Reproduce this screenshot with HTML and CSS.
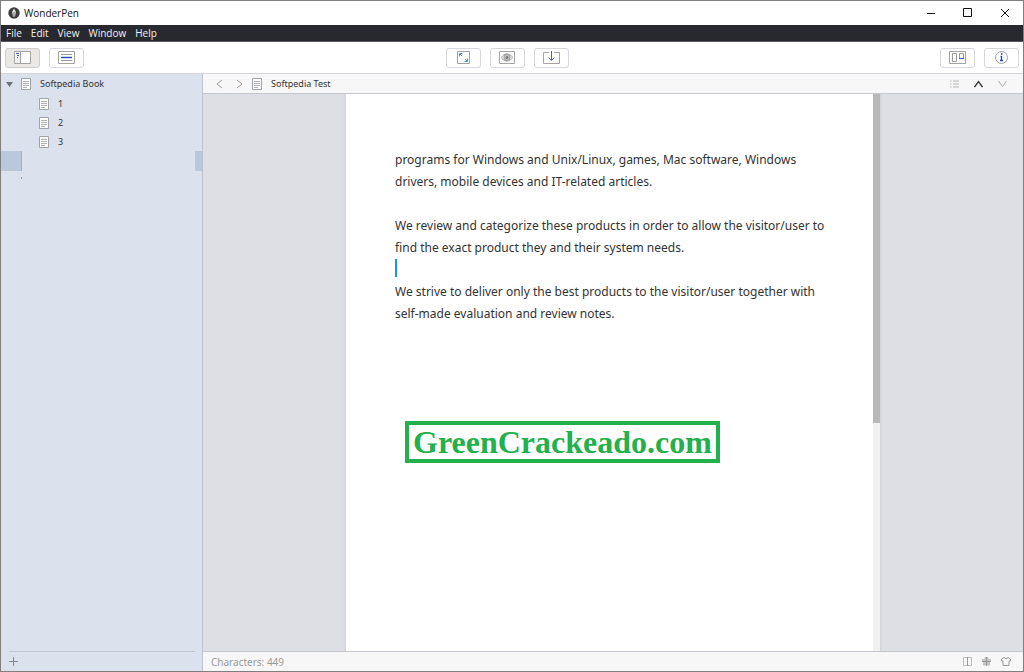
FILE: index.html
```
<!DOCTYPE html>
<html lang="en">
<head>
<meta charset="utf-8">
<title>WonderPen</title>
<link rel="stylesheet" href="styles.css">
</head>
<body>
<svg class="defs" aria-hidden="true">
  <symbol id="doc" viewBox="0 0 11 12"><path d="M.5.5h9v11h-9z" fill="#fcfcfc" stroke="#a0a3a8"/><path d="M2 3.500h6M2 5.500h6M2 7.500h6M2 9.500h4" stroke="#b0b2b6"/></symbol>
</svg>
<div class="window">
  <header class="titlebar">
    <svg class="logo" width="12" height="12" viewBox="0 0 12 12"><circle cx="6" cy="6" r="5.700" fill="#3c3c3c"/><path d="M6 1.500 7.900 5 7 9.500H5L4.100 5z" fill="#e8e8e4"/><path d="M6 5v4" stroke="#666"/></svg>
    <h1 class="title">WonderPen</h1>
    <div class="controls">
      <button class="control" aria-label="Minimize"><svg width="10" height="10"><path d="M1 5.500h8" stroke="#111"/></svg></button>
      <button class="control" aria-label="Maximize"><svg width="10" height="10"><path d="M.5.5h8v8h-8z" fill="none" stroke="#111"/></svg></button>
      <button class="control" aria-label="Close"><svg width="10" height="10"><path d="m1 1 8 8m0-8L1 9" stroke="#111"/></svg></button>
    </div>
  </header>
  <nav class="menubar" aria-label="Main menu">
    <button class="menu">File</button><button class="menu">Edit</button><button class="menu">View</button><button class="menu">Window</button><button class="menu">Help</button>
  </nav>
  <div class="toolbar">
    <div class="tools">
      <button class="tool active" aria-label="Toggle sidebar"><svg width="17" height="13"><path d="M.5.5h16v12H.5z" fill="#fff" stroke="#a3a3a3"/><path d="M1 1h5v11H1z" fill="#f1f1f1"/><path d="M6.500 1v11" stroke="#a3a3a3"/><path d="M2 2.500h3M3 4.500h2M3 6.500h1" stroke="#4763b8"/></svg></button>
      <button class="tool" aria-label="Outline"><svg width="17" height="13"><path d="M.5.5h16v12H.5z" fill="#fff" stroke="#a3a3a3"/><path d="M3 3.500h11M3 9.500h11" stroke="#999"/><path d="M3 6.500h11" stroke="#2348b4" stroke-width="1.400"/></svg></button>
    </div>
    <div class="tools center">
      <button class="tool" aria-label="Full screen"><svg width="13" height="13"><path d="M.5.5h12v12H.5z" fill="#fff" stroke="#a3a3a3"/><path d="M5.500 2.500h-3v3M3 3l2 2M7.500 10.500h3v-3M10 10 8 8" fill="none" stroke="#4a90e2"/></svg></button>
      <button class="tool" aria-label="Focus mode"><svg width="16" height="13"><path d="M.5.5h15v12H.5z" fill="#fff" stroke="#a3a3a3"/><path d="M2 6.500Q8-1 14 6.500 8 14 2 6.500z" fill="#e8e8e8" stroke="#aaa"/><circle cx="8" cy="6.500" r="3" fill="#ccc" stroke="#999"/><circle cx="8" cy="6.500" r="1.500" fill="#777"/></svg></button>
      <button class="tool" aria-label="Export"><svg width="17" height="13"><path d="M6 1.500H.5v11h16v-11H11" fill="none" stroke="#a3a3a3"/><path d="M8.500 0v9M5.500 6.500l3 3 3-3" fill="none" stroke="#4763c8"/></svg></button>
    </div>
    <div class="tools end">
      <button class="tool" aria-label="Cards"><svg width="17" height="13"><path d="M.5.5h16v12H.5z" fill="#fff" stroke="#a3a3a3"/><path d="M3.500 2.500h4v8h-4zM10.500 2.500h4v5h-4z" fill="none" stroke="#999"/><path d="M10 7.500h5" stroke="#3454c4"/></svg></button>
      <button class="tool" aria-label="Information"><svg width="13" height="13"><circle cx="6.500" cy="6.500" r="6" fill="#fff" stroke="#a3a3a3"/><path d="M5.500 5.500h1v4M5 9.500h3M6 3h1.500" fill="none" stroke="#2348b4" stroke-width="1.300"/></svg></button>
    </div>
  </div>
  <div class="main">
    <aside class="sidebar">
      <ul class="tree">
        <li class="row root"><svg width="7" height="5"><path d="M0 0h7L3.500 5z" fill="#707278"/></svg><svg width="11" height="12"><use href="#doc"/></svg>Softpedia Book</li>
        <li class="row child"><svg width="11" height="12"><use href="#doc"/></svg>1</li>
        <li class="row child"><svg width="11" height="12"><use href="#doc"/></svg>2</li>
        <li class="row child"><svg width="11" height="12"><use href="#doc"/></svg>3</li>
        <li class="row selected"><span class="edge start"></span><span class="edge"></span></li>
        <li class="row speck"><span class="dot"></span></li>
      </ul>
      <div class="sidefoot"><button class="plain" aria-label="Add document"><svg width="9" height="9"><path d="M4.500 0v9M0 4.500h9" stroke="#85888e"/></svg></button></div>
    </aside>
    <section class="editor">
      <div class="path">
        <button class="plain" aria-label="Back"><svg width="7" height="10"><path d="M6 1 1 5l5 4" fill="none" stroke="#999"/></svg></button>
        <button class="plain" aria-label="Forward"><svg width="7" height="10"><path d="m1 1 5 4-5 4" fill="none" stroke="#999"/></svg></button>
        <h2 class="docname"><svg width="11" height="12"><use href="#doc"/></svg>Softpedia Test</h2>
        <div class="pathend">
          <button class="plain" aria-label="Contents"><svg width="9" height="8"><path d="M0 1h1.500M3 1h6M0 4h1.500M3 4h6M0 7h1.500M3 7h6" stroke="#b8b8b8"/></svg></button>
          <button class="plain" aria-label="Previous"><svg width="9" height="8"><path d="m.5 7 4-5.500 4 5.500" fill="none" stroke="#333" stroke-width="1.300"/></svg></button>
          <button class="plain" aria-label="Next"><svg width="9" height="8"><path d="m.5 1 4 5.500L8.500 1" fill="none" stroke="#aaa"/></svg></button>
        </div>
      </div>
      <div class="desk">
        <div class="paper">
          <div class="page" role="textbox" aria-multiline="true" aria-label="Document" tabindex="0">
            <p>programs for Windows and Unix/Linux, games, Mac software, Windows drivers, mobile devices and IT-related articles.</p>
            <p class="blank"></p>
            <p>We review and categorize these products in order to allow the visitor/user to find the exact product they and their system needs.</p>
            <p class="blank"><span class="caret"></span></p>
            <p>We strive to deliver only the best products to the visitor/user together with self-made evaluation and review notes.</p>
            <div class="stamp">GreenCrackeado.com</div>
          </div>
          <div class="scroll"><div class="thumb"></div></div>
        </div>
      </div>
      <footer class="status">
        <span>Characters: 449</span>
        <div class="statusend">
          <button class="plain" aria-label="Split view"><svg width="9" height="9"><path d="M4 .5H.5v8H4M5 .5h3.500v8H5" fill="none" stroke="#bbb"/><path d="M4.500 0v9" stroke="#999"/></svg></button>
          <button class="plain" aria-label="Gift"><svg width="9" height="9"><path d="M0 2h9v2.500H0zM1 5h7v3.500H1z" fill="#c4c4c4"/><path d="M4.500 0v9M2.500 1h4M0 4.500h9" stroke="#999"/></svg></button>
          <button class="plain" aria-label="Theme"><svg width="10" height="9"><path d="M3 .5.5 2v2H2v4.500h6V4h1.500V2L7 .5Q5 3 3 .5z" fill="none" stroke="#999"/></svg></button>
        </div>
      </footer>
    </section>
  </div>
</div>
</body>
</html>
```
FILE: styles.css
```
* { box-sizing: border-box; }
body, h1, h2, p, ul { margin: 0; padding: 0; font-size: inherit; font-weight: 400; }
body { font: 10px/14px "Noto Sans", "Open Sans", sans-serif; color: #333; }
button { padding: 0; border: 0; background: none; font: inherit; color: inherit; }
svg { display: block; flex: none; }
.defs { position: absolute; width: 0; height: 0; }
.window { height: 100vh; display: flex; flex-direction: column; border: 1px solid #7f7f7f; background: #fff; }
.titlebar { height: 24px; flex: none; display: flex; align-items: center; padding-left: 7px; gap: 4px; color: #111; }
.title { font-family: "Open Sans", sans-serif; }
.controls { margin-left: auto; display: flex; }
.control { width: 37px; height: 23px; display: grid; place-items: center; }
.menubar { height: 17px; flex: none; display: flex; gap: 9px; padding-left: 5px; align-items: center; background: #28292e; color: #f2f2f2; border-bottom: 1px solid #55565a; font-family: "Open Sans", sans-serif; }
.toolbar { height: 32px; flex: none; display: grid; grid-template-columns: 1fr auto 1fr; align-items: center; padding: 0 4px; border-bottom: 1px solid #d3d4dc; }
.tools { display: flex; gap: 9px; }
.end { justify-content: flex-end; }
.center { padding-right: 10px; }
.tool { width: 35px; height: 20px; display: grid; place-items: center; border: 1px solid #d6d6df; border-radius: 3px; background: #fff; }
.active { background: #e9e8e5; border-color: #cfcfd2; }
.main { flex: 1; min-height: 0; display: flex; }
.sidebar { width: 202px; flex: none; display: flex; flex-direction: column; background: #dbe1ed; border-right: 1px solid #c0c3cf; color: #333; }
.tree { flex: 1; list-style: none; font-size: 9px; }
.row { height: 19px; display: flex; align-items: center; gap: 8px; }
.root { height: 20px; padding-left: 5px; }
.child { padding-left: 38px; }
.selected { height: 20px; justify-content: space-between; }
.edge { width: 7px; height: 20px; background: #bac8dc; }
.start { width: 21px; border-right: 1px solid #a5aebd; }
.speck { padding-left: 20px; height: 13px; }
.dot { width: 1px; height: 2px; background: #a0a4ad; }
.sidefoot { height: 20px; margin: 0 7px 0 8px; border-top: 1px solid #c2c6d0; display: flex; align-items: center; }
.editor { flex: 1; min-width: 0; display: flex; flex-direction: column; }
.path { height: 20px; flex: none; display: flex; align-items: center; gap: 13px; padding: 0 16px 0 13px; background: #f7f7f7; border-bottom: 1px solid #c6c7cf; }
.docname { display: flex; align-items: center; gap: 8px; margin-left: -4px; font-size: 9px; }
.pathend { margin-left: auto; display: flex; gap: 15px; }
.desk { flex: 1; min-height: 0; display: flex; justify-content: center; background: #dddfe4; }
.paper { width: 100%; max-width: 534px; display: flex; background: #fff; box-shadow: 0 0 3px #c4c5ca; clip-path: inset(0 -4px); }
.page { flex: 1; padding: 55px 36px 0 49px; font-size: 12px; line-height: 22px; outline: 0; }
.blank { height: 22px; }
.caret { display: block; width: 2px; height: 18px; background: #1296f3; }
.stamp { width: fit-content; margin: 96px 0 0 10px; padding: 0 4px; border: 4px solid #22b14c; color: #22b14c; font: bold 32px/34px "Palatino Linotype", Palatino, "Liberation Serif", serif; }
.scroll { width: 7px; background: #f1f1f1; }
.thumb { height: 59%; background: #b8b8b8; }
.status { height: 20px; flex: none; display: flex; align-items: center; padding: 0 12px 0 8px; background: #f7f7f7; border-top: 1px solid #c6c7cf; color: #999; }
.statusend { margin-left: auto; display: flex; gap: 10px; }
```
